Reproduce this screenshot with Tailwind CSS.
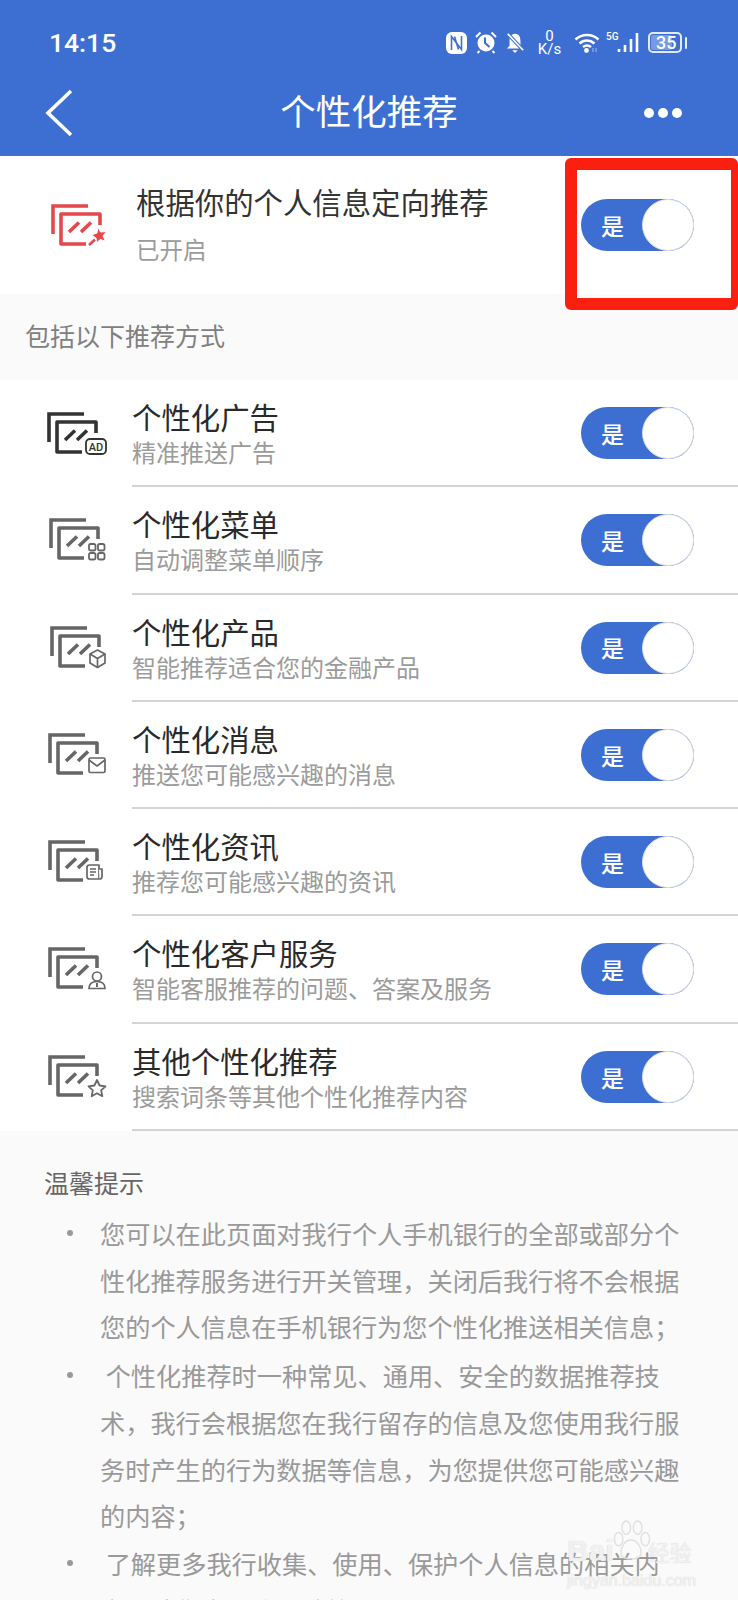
<!DOCTYPE html>
<html lang="zh-CN">
<head>
    <meta charset="UTF-8">
    <meta name="viewport" content="width=device-width, initial-scale=1.0">
    <title>个性化推荐</title>
    <script src="https://cdn.jsdelivr.net/npm/@tailwindcss/browser@4"></script>
</head>
<body class="bg-[#fafafa] font-['Noto_Sans_CJK_SC','Noto_Sans',sans-serif] overflow-hidden">
<div class="relative w-[738px] h-[1600px] overflow-hidden">

    <!-- shared icon frame -->
    <svg class="hidden">
        <symbol id="frames" viewBox="0 0 58 46">
            <path d="M37 2H2V30" fill="none" stroke="currentColor" stroke-width="3.6"/>
            <path d="M35 40H10V10H49V21" fill="none" stroke="currentColor" stroke-width="3.6" stroke-linejoin="round"/>
            <path d="M18 28L28 18.500M30 28L40 18.500" fill="none" stroke="currentColor" stroke-width="3.6"/>
        </symbol>
    </svg>

    <!-- blue header -->
    <header class="h-[156px] bg-[#3d6fd3] text-white">
        <div class="h-[84px] flex items-center pl-[49px] pr-[51px] pt-[1px]">
            <span class="font-['Roboto'] text-[26.500px] font-medium">14:15</span>
            <div class="ml-auto flex items-center">
                <svg class="w-[21px] h-[22px]" viewBox="0 0 21 22"><rect width="21" height="22" rx="6" fill="white"/><path d="M5.500 18V4.500L15.500 17.500V4M8.500 4.500L12.500 17.500" fill="none" stroke="#3d6fd3" stroke-width="1.6"/></svg>
                <svg class="ml-[8px] w-[22px] h-[23px]" viewBox="0 0 22 23"><circle cx="11" cy="12" r="8.500" fill="white"/><path d="M10 6.500V12L14.500 16" fill="none" stroke="#3d6fd3" stroke-width="2"/><path d="M1 6L5.500 1.500M21 6L16.500 1.500M4.500 20L2.500 22M17.500 20L19.500 22" stroke="white" stroke-width="2" fill="none"/></svg>
                <svg class="ml-[8px] w-[20px] h-[23px]" viewBox="0 0 22 23"><path d="M11 2C6.500 2 5 6 5 10V15L2 18H20L17 15V10C17 6 15.500 2 11 2Z" fill="white"/><path d="M8 20H14L11 23Z" fill="white"/><path d="M3 2L20 20" stroke="#3d6fd3" stroke-width="4"/><path d="M3 2L20 20" stroke="white" stroke-width="1.8"/></svg>
                <div class="ml-[13px] w-[23px] flex flex-col items-center font-['Roboto'] text-[15px] leading-[13px] mt-[1px]"><span>0</span><span>K/s</span></div>
                <svg class="ml-[13px] w-[26px] h-[21px]" viewBox="0 0 26 21"><path d="M1.500 7.500C8 1.500 18 1.500 24.500 7.500M5.500 11.500C10 7.500 16 7.500 20.500 11.500M9 15C11.500 13 14.500 13 17 15" fill="none" stroke="white" stroke-width="2.4"/><circle cx="12.500" cy="18.500" r="2.400" fill="white"/><path d="M19 16V20M22 16V20" stroke="white" stroke-opacity="0.35" stroke-width="1.5"/></svg>
                <div class="ml-[6px] w-[11px] -mt-[11px] font-['Roboto'] text-[10px] leading-[10px] font-medium">5G</div>
                <svg class="w-[22px] h-[21px]" viewBox="0 0 22 21"><path d="M2 20V17M8 20V13M14 20V7M20 20V1" stroke="white" stroke-width="2.6" fill="none"/></svg>
                <div class="ml-[9px] w-[34px] h-[21px] rounded-[5px] border-2 border-white/85 p-[1px] flex">
                    <div class="w-[21px] bg-white/30 rounded-[2px] flex items-center font-['Roboto'] text-[18px] leading-none font-medium pl-[5px]">35</div>
                </div>
                <div class="ml-[3px] w-[2px] h-[12px] bg-white/90 rounded-full"></div>
            </div>
        </div>
        <div class="relative h-[72px] flex items-center justify-center">
            <svg class="absolute left-[43px] top-[4px] w-[32px] h-[50px]" viewBox="0 0 32 50"><path d="M28 3L5 25L28 47" fill="none" stroke="white" stroke-width="3.6"/></svg>
            <h1 class="text-[35.5px] leading-none -mt-[20px]">个性化推荐</h1>
            <div class="absolute left-[644px] top-[24px] flex gap-[4px]">
                <span class="w-[10px] h-[10px] rounded-full bg-white"></span>
                <span class="w-[10px] h-[10px] rounded-full bg-white"></span>
                <span class="w-[10px] h-[10px] rounded-full bg-white"></span>
            </div>
        </div>
    </header>

    <!-- master switch -->
    <section class="relative h-[138px] bg-white flex">
        <div class="w-[136px] pl-[51px] pt-[48px] text-[#e5484a]">
            <svg class="w-[58px] h-[46px]" viewBox="0 0 58 46">
                <use href="#frames" width="58" height="46"/>
                <path d="M47 23L49.500 28L55.500 27.500L52 32L54.500 37L49 35.500L45.500 39L45 34L40.500 31L46 29Z" fill="#e5484a" stroke="white" stroke-width="1"/>
                <path d="M44 35.500L38 41" stroke="#e5484a" stroke-width="2.6"/>
            </svg>
        </div>
        <div class="pt-[27px]">
            <div class="text-[29.400px] leading-[36px] text-[#333]">根据你的个人信息定向推荐</div>
            <div class="mt-[15px] text-[23.500px] leading-[30px] text-[#9b9b9b]">已开启</div>
        </div>
        <div class="absolute left-[581px] top-[43px] w-[113px] h-[52px] rounded-full bg-[#3d6fd3] flex items-center pl-[20px] text-white text-[23px] font-medium">是<span class="absolute right-0 top-0 w-[52px] h-[52px] rounded-full bg-white border border-[#dedede]"></span></div>
    </section>

    <div class="h-[86px] pl-[25px] pt-[24px] text-[25px] leading-[34px] text-[#808080]">包括以下推荐方式</div>

    <!-- rows -->
    <ul class="bg-white">
        <li class="flex h-[107.300px]">
            <div class="w-[132px] pl-[47px] pt-[32px] text-[#333]">
                <svg class="w-[64px] h-[46px]" viewBox="0 0 64 46"><use href="#frames" width="58" height="46"/><rect x="39" y="27" width="20" height="15" rx="4" fill="white" stroke="currentColor" stroke-width="1.8"/><text x="49" y="38.500" text-anchor="middle" font-size="11" font-weight="500" fill="currentColor" font-family="Roboto">AD</text></svg>
            </div>
            <div class="flex-1 border-b-2 border-[#d4d4d4] relative">
                <div class="pt-[18px] text-[29.400px] leading-[36px] text-[#2a2a2a]">个性化广告</div>
                <div class="mt-[1px] text-[24px] leading-[34px] text-[#9b9b9b]">精准推送广告</div>
                <div class="absolute left-[449px] top-[27px] w-[113px] h-[52px] rounded-full bg-[#3d6fd3] flex items-center pl-[20px] text-white text-[23px] font-medium">是<span class="absolute right-0 top-0 w-[52px] h-[52px] rounded-full bg-white border border-[#dedede]"></span></div>
            </div>
        </li>
        <li class="flex h-[107.300px]">
            <div class="w-[132px] pl-[49px] pt-[31px] text-[#666]">
                <svg class="w-[64px] h-[46px]" viewBox="0 0 64 46"><use href="#frames" width="58" height="46"/><g fill="none" stroke="currentColor" stroke-width="1.8"><rect x="40" y="26" width="6.500" height="6.500" rx="1.800"/><rect x="49" y="26" width="6.500" height="6.500" rx="1.800"/><rect x="40" y="35" width="6.500" height="6.500" rx="1.800"/><rect x="49" y="35" width="6.500" height="6.500" rx="1.800"/></g></svg>
            </div>
            <div class="flex-1 border-b-2 border-[#d4d4d4] relative">
                <div class="pt-[18px] text-[29.400px] leading-[36px] text-[#2a2a2a]">个性化菜单</div>
                <div class="mt-[1px] text-[24px] leading-[34px] text-[#9b9b9b]">自动调整菜单顺序</div>
                <div class="absolute left-[449px] top-[27px] w-[113px] h-[52px] rounded-full bg-[#3d6fd3] flex items-center pl-[20px] text-white text-[23px] font-medium">是<span class="absolute right-0 top-0 w-[52px] h-[52px] rounded-full bg-white border border-[#dedede]"></span></div>
            </div>
        </li>
        <li class="flex h-[107.300px]">
            <div class="w-[132px] pl-[50px] pt-[31px] text-[#666]">
                <svg class="w-[64px] h-[46px]" viewBox="0 0 64 46"><use href="#frames" width="58" height="46"/><g fill="white" stroke="currentColor" stroke-width="1.7" stroke-linejoin="round"><path d="M47.500 24L55 28V37L47.500 41.500L40 37V28Z"/><path d="M40 28L47.500 32.500L55 28M47.500 32.500V41.500" fill="none"/></g></svg>
            </div>
            <div class="flex-1 border-b-2 border-[#d4d4d4] relative">
                <div class="pt-[18px] text-[29.400px] leading-[36px] text-[#2a2a2a]">个性化产品</div>
                <div class="mt-[1px] text-[24px] leading-[34px] text-[#9b9b9b]">智能推荐适合您的金融产品</div>
                <div class="absolute left-[449px] top-[27px] w-[113px] h-[52px] rounded-full bg-[#3d6fd3] flex items-center pl-[20px] text-white text-[23px] font-medium">是<span class="absolute right-0 top-0 w-[52px] h-[52px] rounded-full bg-white border border-[#dedede]"></span></div>
            </div>
        </li>
        <li class="flex h-[107.300px]">
            <div class="w-[132px] pl-[48px] pt-[31px] text-[#666]">
                <svg class="w-[64px] h-[46px]" viewBox="0 0 64 46"><use href="#frames" width="58" height="46"/><g fill="white" stroke="currentColor" stroke-width="1.7" stroke-linejoin="round"><rect x="41" y="25" width="16" height="14.500" rx="1.500"/><path d="M41 27L49 33L57 27" fill="none"/></g></svg>
            </div>
            <div class="flex-1 border-b-2 border-[#d4d4d4] relative">
                <div class="pt-[18px] text-[29.400px] leading-[36px] text-[#2a2a2a]">个性化消息</div>
                <div class="mt-[1px] text-[24px] leading-[34px] text-[#9b9b9b]">推送您可能感兴趣的消息</div>
                <div class="absolute left-[449px] top-[27px] w-[113px] h-[52px] rounded-full bg-[#3d6fd3] flex items-center pl-[20px] text-white text-[23px] font-medium">是<span class="absolute right-0 top-0 w-[52px] h-[52px] rounded-full bg-white border border-[#dedede]"></span></div>
            </div>
        </li>
        <li class="flex h-[107.300px]">
            <div class="w-[132px] pl-[48px] pt-[31px] text-[#666]">
                <svg class="w-[64px] h-[46px]" viewBox="0 0 64 46"><use href="#frames" width="58" height="46"/><g fill="white" stroke="currentColor" stroke-width="1.7" stroke-linejoin="round"><path d="M39 27.500C39 26 40 25 41.500 25H51V39H41.500C40 39 39 38 39 36.500Z"/><path d="M51 29H54V36.500C54 38 53 39 51.500 39"/><path d="M42 29H48M42 32H48M42 35H46" fill="none" stroke-width="1.5"/></g></svg>
            </div>
            <div class="flex-1 border-b-2 border-[#d4d4d4] relative">
                <div class="pt-[18px] text-[29.400px] leading-[36px] text-[#2a2a2a]">个性化资讯</div>
                <div class="mt-[1px] text-[24px] leading-[34px] text-[#9b9b9b]">推荐您可能感兴趣的资讯</div>
                <div class="absolute left-[449px] top-[27px] w-[113px] h-[52px] rounded-full bg-[#3d6fd3] flex items-center pl-[20px] text-white text-[23px] font-medium">是<span class="absolute right-0 top-0 w-[52px] h-[52px] rounded-full bg-white border border-[#dedede]"></span></div>
            </div>
        </li>
        <li class="flex h-[107.300px]">
            <div class="w-[132px] pl-[48px] pt-[31px] text-[#666]">
                <svg class="w-[64px] h-[46px]" viewBox="0 0 64 46"><use href="#frames" width="58" height="46"/><g fill="white" stroke="currentColor" stroke-width="1.7"><path d="M41 41.500C41 37 44 34.500 49 34.500C54 34.500 57 37 57 41.500Z"/><circle cx="49" cy="29.500" r="4.500"/><path d="M49 36V40" fill="none" stroke-width="2"/></g></svg>
            </div>
            <div class="flex-1 border-b-2 border-[#d4d4d4] relative">
                <div class="pt-[18px] text-[29.400px] leading-[36px] text-[#2a2a2a]">个性化客户服务</div>
                <div class="mt-[1px] text-[24px] leading-[34px] text-[#9b9b9b]">智能客服推荐的问题、答案及服务</div>
                <div class="absolute left-[449px] top-[27px] w-[113px] h-[52px] rounded-full bg-[#3d6fd3] flex items-center pl-[20px] text-white text-[23px] font-medium">是<span class="absolute right-0 top-0 w-[52px] h-[52px] rounded-full bg-white border border-[#dedede]"></span></div>
            </div>
        </li>
        <li class="flex h-[107.300px]">
            <div class="w-[132px] pl-[48px] pt-[31px] text-[#666]">
                <svg class="w-[64px] h-[46px]" viewBox="0 0 64 46"><use href="#frames" width="58" height="46"/><path d="M49 25L51.600 30.500L57.500 31.300L53.200 35.300L54.300 41.200L49 38.300L43.700 41.200L44.800 35.300L40.500 31.300L46.400 30.500Z" fill="white" stroke="currentColor" stroke-width="1.8" stroke-linejoin="round"/></svg>
            </div>
            <div class="flex-1 border-b-2 border-[#d4d4d4] relative">
                <div class="pt-[18px] text-[29.400px] leading-[36px] text-[#2a2a2a]">其他个性化推荐</div>
                <div class="mt-[1px] text-[24px] leading-[34px] text-[#9b9b9b]">搜索词条等其他个性化推荐内容</div>
                <div class="absolute left-[449px] top-[27px] w-[113px] h-[52px] rounded-full bg-[#3d6fd3] flex items-center pl-[20px] text-white text-[23px] font-medium">是<span class="absolute right-0 top-0 w-[52px] h-[52px] rounded-full bg-white border border-[#dedede]"></span></div>
            </div>
        </li>
    </ul>

    <!-- tips -->
    <section class="pl-[44px] pt-[34px]">
        <h2 class="text-[25px] leading-[34px] font-normal text-[#666]">温馨提示</h2>
        <ul class="mt-[11px] w-[640px] text-[25.200px] leading-[46.700px] text-[#999]">
            <li class="flex"><span class="w-[56px] pl-[24px]"><span class="block w-[6px] h-[6px] mt-[20px] -ml-[1px] rounded-full bg-[#999]"></span></span><p class="w-[584px]">您可以在此页面对我行个人手机银行的全部或部分个性化推荐服务进行开关管理，关闭后我行将不会根据您的个人信息在手机银行为您个性化推送相关信息；</p></li>
            <li class="flex mt-[2px]"><span class="w-[56px] pl-[24px]"><span class="block w-[6px] h-[6px] mt-[20px] -ml-[1px] rounded-full bg-[#999]"></span></span><p class="w-[584px]">&nbsp;个性化推荐时一种常见、通用、安全的数据推荐技术，我行会根据您在我行留存的信息及您使用我行服务时产生的行为数据等信息，为您提供您可能感兴趣的内容；</p></li>
            <li class="flex mt-[1px]"><span class="w-[56px] pl-[24px]"><span class="block w-[6px] h-[6px] mt-[20px] -ml-[1px] rounded-full bg-[#999]"></span></span><p class="w-[584px]">&nbsp;了解更多我行收集、使用、保护个人信息的相关内容，请您查看隐私政策。</p></li>
        </ul>
    </section>

    <!-- red annotation box -->
    <div class="absolute left-[565px] top-[158px] w-[173px] h-[152px] border-t-[12px] border-b-[12px] border-l-[12px] border-r-[7px] border-[#fb1f10] rounded-[6px]"></div>

    <!-- watermark -->
    <div class="absolute left-[567px] top-[1518px] w-[135px] text-white/75 [text-shadow:0_0_1px_#c4c4c4]">
        <svg class="absolute left-[44px] top-[2px] w-[40px] h-[42px]" viewBox="0 0 42 44" fill="none" stroke="#e0e0e0" stroke-width="1.5"><ellipse cx="8" cy="20" rx="4.500" ry="7"/><ellipse cx="16" cy="8" rx="4.500" ry="7"/><ellipse cx="28" cy="8" rx="4.500" ry="7"/><ellipse cx="36" cy="20" rx="4.500" ry="7"/><path d="M21 21C14 21 9 30 11 37C14 42 28 42 31 37C33 30 28 21 21 21Z"/></svg>
        <div class="pt-[15px] font-['Liberation_Sans','Noto_Sans_CJK_SC',sans-serif] text-[30px] leading-[36px] font-bold">Bai<span class="ml-[34px] text-[22px] font-normal">经验</span></div>
        <div class="font-['Liberation_Sans'] text-[16px] leading-[18px]">jingyan.baidu.com</div>
    </div>
</div>
</body>
</html>
